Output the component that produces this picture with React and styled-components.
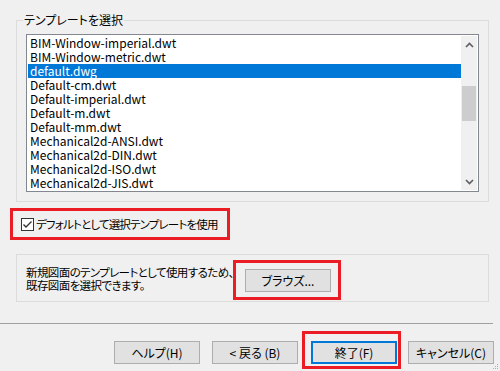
import styled, { createGlobalStyle } from "styled-components";

const templates = [
  "BIM-Window-imperial.dwt",
  "BIM-Window-metric.dwt",
  "default.dwg",
  "Default-cm.dwt",
  "Default-imperial.dwt",
  "Default-m.dwt",
  "Default-mm.dwt",
  "Mechanical2d-ANSI.dwt",
  "Mechanical2d-DIN.dwt",
  "Mechanical2d-ISO.dwt",
  "Mechanical2d-JIS.dwt",
];

const GlobalStyle = createGlobalStyle`
  html, body {
    margin: 0;
    padding: 0;
    background: #f0f0f0;
  }
  body {
    font-family: "Noto Sans CJK JP", "Noto Sans", sans-serif;
    font-size: 12px;
    color: #000;
    font-feature-settings: "palt";
  }
`;

const Dialog = styled.div`
  position: relative;
  width: 500px;
  height: 371px;
  display: flex;
  flex-direction: column;
  overflow: hidden;
`;

const GroupBox = styled.div`
  position: relative;
  box-sizing: border-box;
  margin: ${(p) => p.$top}px 11px 0 16px;
  height: ${(p) => p.$height}px;
  border: 1px solid #dcdcdc;
  padding: ${(p) => p.$padding};
  display: flex;
`;

const Legend = styled.span`
  position: absolute;
  top: -9px;
  left: 6px;
  padding: 0 1px;
  line-height: 16px;
  background: #f0f0f0;
`;

const ListBox = styled.div`
  flex: 1;
  box-sizing: border-box;
  height: 158px;
  border: 1px solid #828790;
  background: #fff;
  padding: 1px;
  display: flex;
`;

const Items = styled.div`
  flex: 1;
  display: flex;
  flex-direction: column;
`;

const Item = styled.div`
  height: 14px;
  line-height: 14px;
  padding-left: 2px;
  white-space: nowrap;
  background: ${(p) => (p.$selected ? "#0078d7" : "transparent")};
  color: ${(p) => (p.$selected ? "#fff" : "#000")};
`;

const ScrollBar = styled.div`
  width: 16px;
  background: #f0f0f0;
  display: flex;
  flex-direction: column;
`;

const ArrowBtn = styled.div`
  height: 17px;
  display: flex;
  align-items: center;
  justify-content: center;
`;

const Track = styled.div`
  flex: 1;
`;

const Thumb = styled.div`
  margin: ${(p) => p.$offset}px 1px 0;
  height: ${(p) => p.$size}px;
  background: #cdcdcd;
`;

const CheckRow = styled.label`
  box-sizing: border-box;
  margin: 6px 0 0 10px;
  width: 220px;
  height: 32px;
  border: 3px solid #ec1c24;
  padding-left: 8px;
  display: flex;
  align-items: center;
  gap: 2px;
  white-space: nowrap;
  font-size: 11.5px;
  letter-spacing: -0.8px;

  svg {
    flex-shrink: 0;
  }
`;

const InfoText = styled.div`
  flex: 0 0 207px;
  min-width: 0;
  align-self: center;
  padding-top: 2px;
  line-height: 13px;
  white-space: nowrap;
  font-size: 11.5px;
  letter-spacing: -0.6px;
`;

const RedFrame = styled.div`
  flex-shrink: 0;
  box-sizing: border-box;
  border: 3px solid #ec1c24;
  width: ${(p) => p.$w}px;
  height: ${(p) => p.$h}px;
  margin: ${(p) => p.$margin};
  padding: ${(p) => p.$padding};
`;

const Button = styled.button`
  flex-shrink: 0;
  box-sizing: border-box;
  width: 86px;
  height: 23px;
  margin-top: ${(p) => p.$top || 0}px;
  margin-left: ${(p) => p.$left || 0}px;
  padding: 0;
  background: #e1e1e1;
  border: ${(p) => (p.$default ? "2px solid #0078d7" : "1px solid #adadad")};
  font: inherit;
  font-feature-settings: "palt";
  color: #000;
  line-height: 1;
`;

const Separator = styled.div`
  margin-top: 21px;
  width: 493px;
  border-top: 1px solid #a0a0a0;
`;

const ButtonRow = styled.div`
  margin-top: 7px;
  padding-left: 114px;
  display: flex;
  align-items: flex-start;
`;

const Grip = styled.svg`
  position: absolute;
  right: 1px;
  bottom: 1px;
`;

const Chevron = ({ down }) => (
  <svg width="9" height="6" viewBox="0 0 9 6">
    <polyline
      points={down ? "1,1 4.5,4.5 8,1" : "1,5 4.5,1.5 8,5"}
      fill="none"
      stroke="#606060"
      strokeWidth="1.7"
    />
  </svg>
);

const CheckBox = () => (
  <svg width="13" height="13" viewBox="0 0 13 13">
    <rect x="0.5" y="0.5" width="12" height="12" fill="#fff" stroke="#333" />
    <polyline points="2.5,6.5 5,9 10.5,3.5" fill="none" stroke="#333" strokeWidth="1.4" />
  </svg>
);

export default function App() {
  return (
    <Dialog>
      <GlobalStyle />
      <GroupBox $top={20} $height={182} $padding="13px 9px 9px 9px">
        <Legend>テンプレートを選択</Legend>
        <ListBox>
          <Items>
            {templates.map((t, i) => (
              <Item key={t} $selected={i === 2}>
                {t}
              </Item>
            ))}
          </Items>
          <ScrollBar>
            <ArrowBtn>
              <Chevron />
            </ArrowBtn>
            <Track>
              <Thumb $offset={33} $size={35} />
            </Track>
            <ArrowBtn>
              <Chevron down />
            </ArrowBtn>
          </ScrollBar>
        </ListBox>
      </GroupBox>

      <CheckRow>
        <CheckBox />
        デフォルトとして選択テンプレートを使用
      </CheckRow>

      <GroupBox $top={14} $height={48} $padding="0 0 0 9px">
        <InfoText>
          新規図面のテンプレートとして使用するため、
          <br />
          既存図面を選択できます。
        </InfoText>
        <RedFrame $w={108} $h={40} $margin="5px 0 0 0" $padding="6px 0 0 9px">
          <Button>ブラウズ...</Button>
        </RedFrame>
      </GroupBox>

      <Separator />

      <ButtonRow>
        <Button $top={10}>ヘルプ(H)</Button>
        <Button $top={10} $left={12}>&lt; 戻る (B)</Button>
        <RedFrame $w={99} $h={38} $margin="0 0 0 4px" $padding="7px 0 0 6px">
          <Button $default>終了(F)</Button>
        </RedFrame>
        <Button $top={10} $left={7}>キャンセル(C)</Button>
      </ButtonRow>

      <Grip width="6" height="6" viewBox="0 0 6 6">
        <rect x="4" y="0" width="1" height="1" fill="#b0b0b0" />
        <rect x="2" y="2" width="1" height="1" fill="#b0b0b0" />
        <rect x="4" y="2" width="1" height="1" fill="#b0b0b0" />
        <rect x="0" y="4" width="1" height="1" fill="#b0b0b0" />
        <rect x="2" y="4" width="1" height="1" fill="#b0b0b0" />
        <rect x="4" y="4" width="1" height="1" fill="#b0b0b0" />
      </Grip>
    </Dialog>
  );
}
